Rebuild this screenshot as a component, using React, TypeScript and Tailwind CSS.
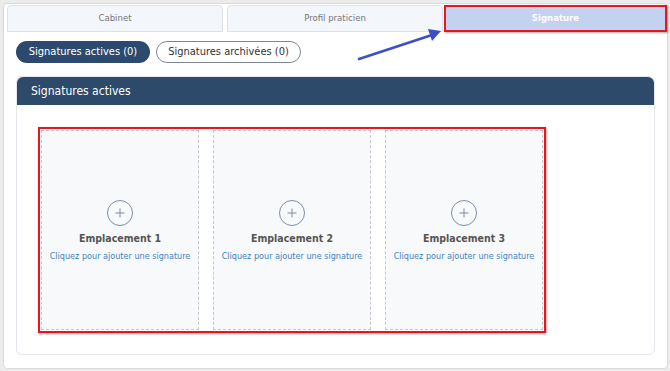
const slots = ["Emplacement 1", "Emplacement 2", "Emplacement 3"];

const App = () => {
  return (
    <div className="w-[670px] h-[371px] bg-[#ececec] pt-[3px] pl-[3px] pr-[2px] pb-[2px] font-['DejaVu_Sans_Condensed','DejaVu_Sans',sans-serif]">
      <div className="relative h-full bg-white border border-[#d9d9d9] rounded-sm">
        {/* tabs */}
        <div className="flex pt-[1px] pl-[3px] gap-[4px]">
          <div className="w-[217px] h-[27px] flex items-center justify-center bg-[#f3f6fb] border border-[#dde2ea] rounded-t text-[9.5px] text-[#777]">
            Cabinet
          </div>
          <div className="w-[217px] h-[27px] flex items-center justify-center bg-[#f3f6fb] border border-[#dde2ea] rounded-t text-[9.5px] text-[#777]">
            Profil praticien
          </div>
          <div className="-ml-[3px] w-[224px] h-[27px] flex items-center justify-center bg-[#c3d2ee] border-2 border-[#e8141f] text-[9.5px] font-bold text-white shadow-[1px_1px_2px_rgba(0,0,0,0.35)]">
            Signature
          </div>
        </div>

        {/* pills */}
        <div className="flex gap-[6px] pl-[12px] mt-[9px]">
          <div className="w-[134px] h-[22px] flex items-center justify-center rounded-full bg-[#2c4a6e] text-white text-[11px]">
            Signatures actives (0)
          </div>
          <div className="w-[145px] h-[22px] flex items-center justify-center rounded-full border border-[#7b8797] text-[#333] text-[11px]">
            Signatures archivées (0)
          </div>
        </div>

        {/* panel */}
        <div className="ml-[12px] mt-[13px] w-[639px] h-[279px] border border-[#e3e6ea] rounded-md flex flex-col">
          <div className="h-[28px] bg-[#2d4a6b] rounded-t-md flex items-center pl-[14px] text-white text-[12px]">
            Signatures actives
          </div>
          <div className="flex-1 pt-[22px] pl-[21px]">
            <div className="w-[508px] h-[206px] border-2 border-[#e8141f] shadow-[1px_1px_2px_rgba(0,0,0,0.35)] p-[1px] flex gap-[14px]">
              {slots.map((name) => (
                <div
                  key={name}
                  className="w-[158px] h-full bg-[#f8f9fb] border border-dashed border-[#c4c8ce] flex flex-col items-center pt-[69px]"
                >
                  <div className="w-[26px] h-[26px] rounded-full border border-[#7d8ea4] flex items-center justify-center">
                    <svg width="12" height="12" viewBox="0 0 12 12">
                      <path d="M6 1.5v9M1.5 6h9" stroke="#7d8ea4" strokeWidth="1" />
                    </svg>
                  </div>
                  <div className="mt-[5px] text-[10.5px] font-bold text-[#555]">{name}</div>
                  <div className="mt-[3px] text-[9px] text-[#3f83c2]">
                    Cliquez pour ajouter une signature
                  </div>
                </div>
              ))}
            </div>
          </div>
        </div>

        {/* annotation arrow */}
        <svg className="absolute left-0 top-0 pointer-events-none" width="670" height="371">
          <line x1="355" y1="55" x2="428" y2="31" stroke="#3d4fc6" strokeWidth="2.5" strokeLinecap="round" />
          <polygon points="437,27 424,25 428,37" fill="#3d4fc6" />
        </svg>
      </div>
    </div>
  );
};

export default App;
